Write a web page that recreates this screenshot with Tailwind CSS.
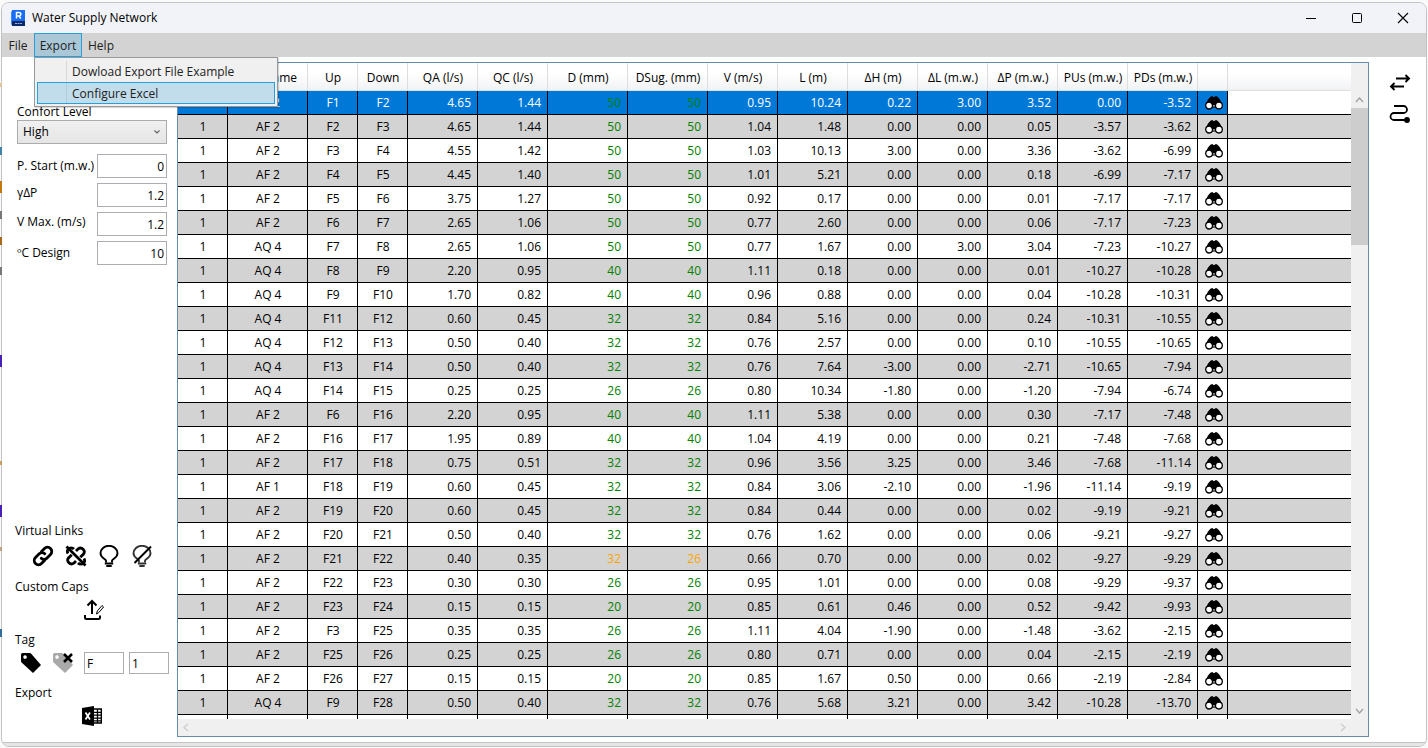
<!DOCTYPE html>
<html lang="en">
<head>
<meta charset="utf-8">
<title>Water Supply Network</title>
<script src="https://cdn.jsdelivr.net/npm/@tailwindcss/browser@4"></script>
</head>
<body class="relative h-screen overflow-hidden bg-[#fafafa] p-px pt-[2px] text-black text-xs font-['Segoe_UI','Open_Sans','Noto_Sans',sans-serif]">
<svg class="hidden" aria-hidden="true">
  <symbol id="binoculars" viewBox="0 0 18 14">
    <path d="M5 1.200 6.200.2h1.700l.5.700h1.200l.5-.7h1.700L13 1.200l2 2.300 2.200 4.500L13 12l-3-3.500H8L5 12 .8 8 3 3.500z" fill="#000"/>
    <circle cx="4.100" cy="9.600" r="3.400" fill="#fff" stroke="#000" stroke-width="1.300"/>
    <circle cx="13.900" cy="9.600" r="3.400" fill="#fff" stroke="#000" stroke-width="1.300"/>
    <path d="M7.200 8h3.600v3.600H7.200z" fill="#000"/><path d="M8.300 9.200h1.400v1.200H8.300z" fill="#fff"/>
  </symbol>
</svg>
<!-- Slivers of the window behind the left border -->
<div class="absolute top-0 left-0 z-20 w-[2px]" aria-hidden="true">
  <div class="mt-[83px] h-1 bg-[#e3c49c]"></div>
  <div class="mt-[60px] h-2 bg-[#3f83a8]"></div>
  <div class="mt-[26px] h-3 bg-[#c07a10]"></div>
  <div class="mt-[18px] h-2 bg-[#777777]"></div>
  <div class="mt-[18px] h-2 bg-[#a8681c]"></div>
  <div class="mt-[22px] h-2 bg-[#777777]"></div>
  <div class="mt-[80px] h-3 bg-[#4a1fb8]"></div>
  <div class="mt-[94px] h-1 bg-[#c9a05c]"></div>
  <div class="mt-[40px] h-3 bg-[#4a1fb8]"></div>
  <div class="mt-[30px] h-1 bg-[#bfa080]"></div>
  <div class="mt-[78px] h-2 bg-[#2f6fa0]"></div>
</div>
<div class="flex h-full flex-col overflow-hidden rounded-lg border border-[#c3c3c3] bg-white">
  <header class="flex h-[30px] shrink-0 items-center bg-[#f2f3f8] pl-[9px]">
    <svg class="h-4 w-[14px]" viewBox="0 0 14 16"><path d="M0 2 2 0v14l-2 1z" fill="#3c8bf5"/><path d="M1 0h13v11H1z" fill="#1a6df5"/><path d="M1 11h13v5H1z" fill="#0a2a6b"/><path d="M5.500 8.500V2.500h2.600a1.700 1.700 0 0 1 0 3.500H5.500M8 6l1.800 2.500" fill="none" stroke="#fff" stroke-width="1.500"/><path d="M4 13.500h7" stroke="#9fb4dc" stroke-dasharray="2 .6"/></svg>
    <h1 class="ml-[7px] flex-1">Water Supply Network</h1>
    <button aria-label="Minimize" class="flex h-full w-[46px] items-center justify-center"><svg class="size-3" viewBox="0 0 12 12"><path d="M1 6.500h10" stroke="#000"/></svg></button>
    <button aria-label="Maximize" class="flex h-full w-[46px] items-center justify-center"><svg class="size-3" viewBox="0 0 12 12"><rect x="1.500" y="1.500" width="9" height="9" rx="1" fill="none" stroke="#000"/></svg></button>
    <button aria-label="Close" class="flex h-full w-[46px] items-center justify-center"><svg class="size-3" viewBox="0 0 12 12"><path d="m1 1 10 10M11 1 1 11" stroke="#000" stroke-width="1.100"/></svg></button>
  </header>
  <nav class="relative z-10 flex h-6 shrink-0 bg-[#d3d3d3] text-[#212121]">
    <button class="w-8 pt-[2px]">File</button>
    <button aria-expanded="true" class="w-12 border border-[#26a0da] bg-[#a9c7d6] pt-[2px]">Export</button>
    <button class="w-[38px] pt-[2px]">Help</button>
    <div role="menu" class="absolute top-full left-8 flex w-[244px] flex-col border border-[#999] bg-[#f0f0f0] p-[2px] shadow-[1px_1px_1px_rgba(0,0,0,0.15)]">
      <button role="menuitem" class="flex h-[22px] items-center border border-transparent"><span class="ml-7 h-full border-l border-[#d7d7d7] pl-[5px] leading-[22px]">Dowload Export File Example</span></button>
      <button role="menuitem" class="flex h-[22px] items-center border border-[#26a0da] bg-[#c1dceb]"><span class="ml-7 h-full border-l border-[#b0cbd9] pl-[5px] leading-[22px]">Configure Excel</span></button>
    </div>
  </nav>
  <main class="flex min-h-0 flex-1 pt-[5px] pb-[5px]">
    <aside class="flex w-[175px] shrink-0 flex-col pt-[42px]">
      <label for="comfort" class="ml-[15px] leading-4">Confort Level</label>
      <div class="relative ml-[15px] w-[150px]">
        <select id="comfort" class="block h-6 w-full appearance-none border border-[#acacac] bg-linear-to-b from-[#f0f0f0] to-[#e5e5e5] px-[5px]"><option>High</option></select>
        <svg class="pointer-events-none absolute top-[9px] right-[6px] h-[6px] w-2" viewBox="0 0 8 6"><path d="M1.500 1.500 4 4 6.500 1.500" fill="none" stroke="#606060" stroke-width="1.100"/></svg>
      </div>
      <div class="mt-[10px] ml-[15px] flex w-[150px] flex-col gap-[5px] leading-5">
        <div class="flex h-6 items-center justify-between"><label for="ps">P. Start (m.w.)</label><input id="ps" value="0" class="h-6 w-[70px] border border-[#abadb3] px-[2px] text-right"></div>
        <div class="flex h-6 items-start justify-between"><label for="yp">γΔP</label><input id="yp" value="1.2" class="h-6 w-[70px] border border-[#abadb3] px-[2px] text-right"></div>
        <div class="flex h-6 items-start justify-between"><label for="vm">V Max. (m/s)</label><input id="vm" value="1.2" class="h-6 w-[70px] border border-[#abadb3] px-[2px] text-right"></div>
        <div class="flex h-6 items-center justify-between"><label for="cd">ºC Design</label><input id="cd" value="10" class="h-6 w-[70px] border border-[#abadb3] px-[2px] text-right"></div>
      </div>
      <div class="mt-auto pb-[11px] pl-[13px] leading-4">
        <h2>Virtual Links</h2>
        <div class="mt-[5px] flex h-6 items-center gap-[11px] pl-[17px]">
          <button aria-label="Link"><svg class="size-[22px]" viewBox="0 0 22 22" fill="none" stroke="#000" stroke-width="2.800" stroke-linecap="round"><path d="m9.500 6.500 3-3a4 4 0 0 1 6 6l-3.700 3.700a3.800 3.800 0 0 1-5.600 0"/><path d="m12.500 15.500-3 3a4 4 0 0 1-6-6l3.700-3.700a3.800 3.800 0 0 1 5.600 0"/></svg></button>
          <button aria-label="Unlink"><svg class="size-[22px]" viewBox="0 0 22 22" fill="none" stroke="#000" stroke-width="2.800"><path d="m11 6 2.200-2.200a3.800 3.800 0 0 1 5.300 5.300l-3.200 3.200M11 16l-2.200 2.200a3.800 3.800 0 0 1-5.300-5.300l3.200-3.200M3 8.500C1.500 6 3 2.800 6 2.800c1.200 0 2.200.4 3 1.200M19 13.500c1.500 2.500 0 5.700-3 5.700-1.200 0-2.200-.4-3-1.200"/><path d="m1.500 1.500 19 19" stroke-width="2.600"/></svg></button>
          <button aria-label="Show caps"><svg class="size-[22px]" viewBox="0 0 22 22" fill="none" stroke="#000" stroke-width="1.900"><path d="M8 17.500v-1.800C7.500 13.800 2.500 13 2.500 8.300a8.500 7.500 0 0 1 17 0c0 4.700-5 5.500-5.500 7.400v1.800"/><path d="M6.800 18.500h8.400M8.300 21h5.400"/></svg></button>
          <button aria-label="Hide caps"><svg class="size-[22px]" viewBox="0 0 22 22" fill="none" stroke="#333" stroke-width="1.900"><path d="M8 17.500v-1.800C7.500 13.800 2.500 13 2.500 8.300a8.500 7.500 0 0 1 17 0c0 4.700-5 5.500-5.500 7.400v1.800"/><path d="M6.800 18.500h8.400M8.300 21h5.400"/><path d="M20 1.500 3.500 18" stroke="#000" stroke-width="2"/></svg></button>
        </div>
        <h2 class="mt-[11px]">Custom Caps</h2>
        <button aria-label="Upload caps" class="mt-1 ml-[69px] block"><svg class="h-[22px] w-5" viewBox="0 0 20 22" fill="none" stroke="#000" stroke-width="2"><path d="M8 15V2M3.500 6.500 8 2l4.500 4.500M1 16v2.500q0 1.500 1.500 1.500h12q1.500 0 1.500-1.500V16.500"/><path d="m12.500 15 .8-3 4.700-5.500 1.600 1.500-4.800 5.500z" fill="#fff" stroke-width="1"/></svg></button>
        <h2 class="mt-[11px]">Tag</h2>
        <div class="mt-1 flex h-[22px] items-center pl-[6px]">
          <button aria-label="Add tag"><svg class="size-5" viewBox="0 0 20 20"><path fill="#000" fill-rule="evenodd" d="M0 1.500Q0 0 1.500 0h7Q9.500 0 10 .6L20 12l-8 8L.6 9.500Q0 9 0 8zM4 2.200a1.800 1.800 0 1 0 .1 0z"/></svg></button>
          <button aria-label="Remove tag" class="ml-3"><svg class="size-5" viewBox="0 0 20 20"><path fill="#a9a9a9" fill-rule="evenodd" d="M0 1.500Q0 0 1.500 0h7Q9.500 0 10 .6L20 12l-8 8L.6 9.500Q0 9 0 8zM4 2.200a1.800 1.800 0 1 0 .1 0z"/><path d="m11 1 8 8M19 1l-8 8" stroke="#000" stroke-width="2.600"/></svg></button>
          <input aria-label="Tag prefix" value="F" class="ml-[11px] h-[22px] w-10 border border-[#abadb3] px-[2px]">
          <input aria-label="Tag number" value="1" class="ml-[5px] h-[22px] w-10 border border-[#abadb3] px-[2px]">
        </div>
        <h2 class="mt-[11px]">Export</h2>
        <button aria-label="Export to Excel" class="mt-[5px] ml-[67px] block"><svg class="size-5" viewBox="0 0 20 20"><path d="M0 2 12 0v20L0 18z"/><path d="M12 3h7.300v14H12" fill="none" stroke="#000" stroke-width="1.400"/><path d="M12 6.300h7M12 9.200h7M12 12.100h7M12 14.800h7M15.500 3v14" stroke="#000" stroke-width="1.300"/><path d="m3.500 6.500 4.500 7M8 6.500l-4.500 7" stroke="#fff" stroke-width="1.700"/></svg></button>
      </div>
    </aside>
    <section class="flex min-w-0 flex-1 flex-col border border-[#688caf]">
      <div class="flex min-h-0 flex-1">
        <div class="min-w-0 flex-1 overflow-hidden">
          <table class="w-full table-fixed border-separate border-spacing-0">
            <thead><tr id="head" class="h-7 bg-linear-to-b from-white from-40% to-[#f0f1f3]"></tr></thead>
            <tbody id="rows"></tbody>
          </table>
        </div>
        <div class="flex w-[17px] shrink-0 flex-col bg-[#f0f0f0] pt-7">
          <svg class="h-[17px] w-[17px]" viewBox="0 0 17 17"><path d="m5 11 3.500-4 3.500 4" fill="none" stroke="#a0a0a0" stroke-width="1.300"/></svg>
          <div class="h-[137px] bg-[#cdcdcd]"></div>
          <svg class="mt-auto h-[17px] w-[17px]" viewBox="0 0 17 17"><path d="m5 7 3.500 4L12 7" fill="none" stroke="#a0a0a0" stroke-width="1.300"/></svg>
        </div>
      </div>
      <div class="flex h-[17px] shrink-0 items-center justify-between bg-[#f0f0f0] pr-[17px]">
        <svg class="size-[17px]" viewBox="0 0 17 17"><path d="m10 5-4 3.500 4 3.500" fill="none" stroke="#ccc" stroke-width="1.300"/></svg>
        <svg class="size-[17px]" viewBox="0 0 17 17"><path d="m7 5 4 3.500L7 12" fill="none" stroke="#ccc" stroke-width="1.300"/></svg>
      </div>
    </section>
    <aside class="flex w-[57px] shrink-0 flex-col gap-[10px] pt-[11px] pl-5">
      <button aria-label="Swap direction" class="w-[22px]"><svg class="h-5 w-[22px]" viewBox="0 0 22 20" fill="none" stroke="#000" stroke-width="1.900"><path d="M7 5.500h13M16.500 2l3.500 3.500L16.500 9M15 13.500H2M5.500 10 2 13.500 5.500 17"/></svg></button>
      <button aria-label="Trace path" class="w-[22px]"><svg class="h-5 w-[22px]" viewBox="0 0 22 20" fill="none" stroke="#000" stroke-width="1.800"><path d="M5 3h9.500a3.500 3.500 0 0 1 0 7H5a3.500 3.500 0 0 0 0 7h12"/><circle cx="18" cy="17" r="2.900" fill="#000" stroke="none"/></svg></button>
    </aside>
  </main>
  <footer class="h-1 shrink-0 border-t border-[#c3c3c3] bg-[#e6e6e6]"></footer>
</div>
<script>
const columns = [['',50],['Sys. Name',80],['Up',50],['Down',50],['QA (l/s)',70],['QC (l/s)',70],['D (mm)',80],['DSug. (mm)',80],['V (m/s)',70],['L (m)',70],['ΔH (m)',70],['ΔL (m.w.)',70],['ΔP (m.w.)',70],['PUs (m.w.)',70],['PDs (m.w.)',70],['',30]];
const data = `AF 2|F1|F2|4.65|1.44|50|50|0.95|10.24|0.22|3.00|3.52|0.00|-3.52
AF 2|F2|F3|4.65|1.44|50|50|1.04|1.48|0.00|0.00|0.05|-3.57|-3.62
AF 2|F3|F4|4.55|1.42|50|50|1.03|10.13|3.00|0.00|3.36|-3.62|-6.99
AF 2|F4|F5|4.45|1.40|50|50|1.01|5.21|0.00|0.00|0.18|-6.99|-7.17
AF 2|F5|F6|3.75|1.27|50|50|0.92|0.17|0.00|0.00|0.01|-7.17|-7.17
AF 2|F6|F7|2.65|1.06|50|50|0.77|2.60|0.00|0.00|0.06|-7.17|-7.23
AQ 4|F7|F8|2.65|1.06|50|50|0.77|1.67|0.00|3.00|3.04|-7.23|-10.27
AQ 4|F8|F9|2.20|0.95|40|40|1.11|0.18|0.00|0.00|0.01|-10.27|-10.28
AQ 4|F9|F10|1.70|0.82|40|40|0.96|0.88|0.00|0.00|0.04|-10.28|-10.31
AQ 4|F11|F12|0.60|0.45|32|32|0.84|5.16|0.00|0.00|0.24|-10.31|-10.55
AQ 4|F12|F13|0.50|0.40|32|32|0.76|2.57|0.00|0.00|0.10|-10.55|-10.65
AQ 4|F13|F14|0.50|0.40|32|32|0.76|7.64|-3.00|0.00|-2.71|-10.65|-7.94
AQ 4|F14|F15|0.25|0.25|26|26|0.80|10.34|-1.80|0.00|-1.20|-7.94|-6.74
AF 2|F6|F16|2.20|0.95|40|40|1.11|5.38|0.00|0.00|0.30|-7.17|-7.48
AF 2|F16|F17|1.95|0.89|40|40|1.04|4.19|0.00|0.00|0.21|-7.48|-7.68
AF 2|F17|F18|0.75|0.51|32|32|0.96|3.56|3.25|0.00|3.46|-7.68|-11.14
AF 1|F18|F19|0.60|0.45|32|32|0.84|3.06|-2.10|0.00|-1.96|-11.14|-9.19
AF 2|F19|F20|0.60|0.45|32|32|0.84|0.44|0.00|0.00|0.02|-9.19|-9.21
AF 2|F20|F21|0.50|0.40|32|32|0.76|1.62|0.00|0.00|0.06|-9.21|-9.27
AF 2|F21|F22|0.40|0.35|32|26|0.66|0.70|0.00|0.00|0.02|-9.27|-9.29
AF 2|F22|F23|0.30|0.30|26|26|0.95|1.01|0.00|0.00|0.08|-9.29|-9.37
AF 2|F23|F24|0.15|0.15|20|20|0.85|0.61|0.46|0.00|0.52|-9.42|-9.93
AF 2|F3|F25|0.35|0.35|26|26|1.11|4.04|-1.90|0.00|-1.48|-3.62|-2.15
AF 2|F25|F26|0.25|0.25|26|26|0.80|0.71|0.00|0.00|0.04|-2.15|-2.19
AF 2|F26|F27|0.15|0.15|20|20|0.85|1.67|0.50|0.00|0.66|-2.19|-2.84
AQ 4|F9|F28|0.50|0.40|32|32|0.76|5.68|3.21|0.00|3.42|-10.28|-13.70`.split('\n').map(line => line.split('|'));

document.getElementById('head').innerHTML = columns.map(([name, width]) =>
  `<th style="width:${width}px" class="border-r border-b border-[#dedede] p-0 pt-[2px] pl-px text-center font-normal whitespace-nowrap">${name}</th>`).join('') + '<th class="border-b border-[#dedede]"></th>';

document.getElementById('rows').innerHTML = data.map((values, i) => {
  const cells = ['1', ...values].map((value, c) => {
    const align = c < 4 ? 'text-center pl-px' : 'text-right pr-[6px]';
    const color = c === 6 || c === 7 ? (values[5] === values[6] ? 'text-[#008000]' : 'text-[#ffa500]') : '';
    return `<td class="border-r border-b border-black p-0 ${align} ${color}">${value}</td>`;
  }).join('');
  const tint = i === 0 ? 'bg-[#0078d7] text-white' : i % 2 ? 'bg-[#d3d3d3]' : 'bg-white';
  const filler = i === 0 ? 'bg-white' : '';
  return `<tr class="h-6 ${tint}">${cells}<td class="border-r border-b border-black p-0 pl-[2px]"><button aria-label="Find" class="mx-auto block"><svg class="h-[14px] w-[18px]"><use href="#binoculars"/></svg></button></td><td class="border-b border-black ${filler}"></td></tr>`;
}).join('') + `<tr class="h-6 bg-white">${'<td class="border-r border-black"></td>'.repeat(16)}<td></td></tr>`;
</script>
</body>
</html>
